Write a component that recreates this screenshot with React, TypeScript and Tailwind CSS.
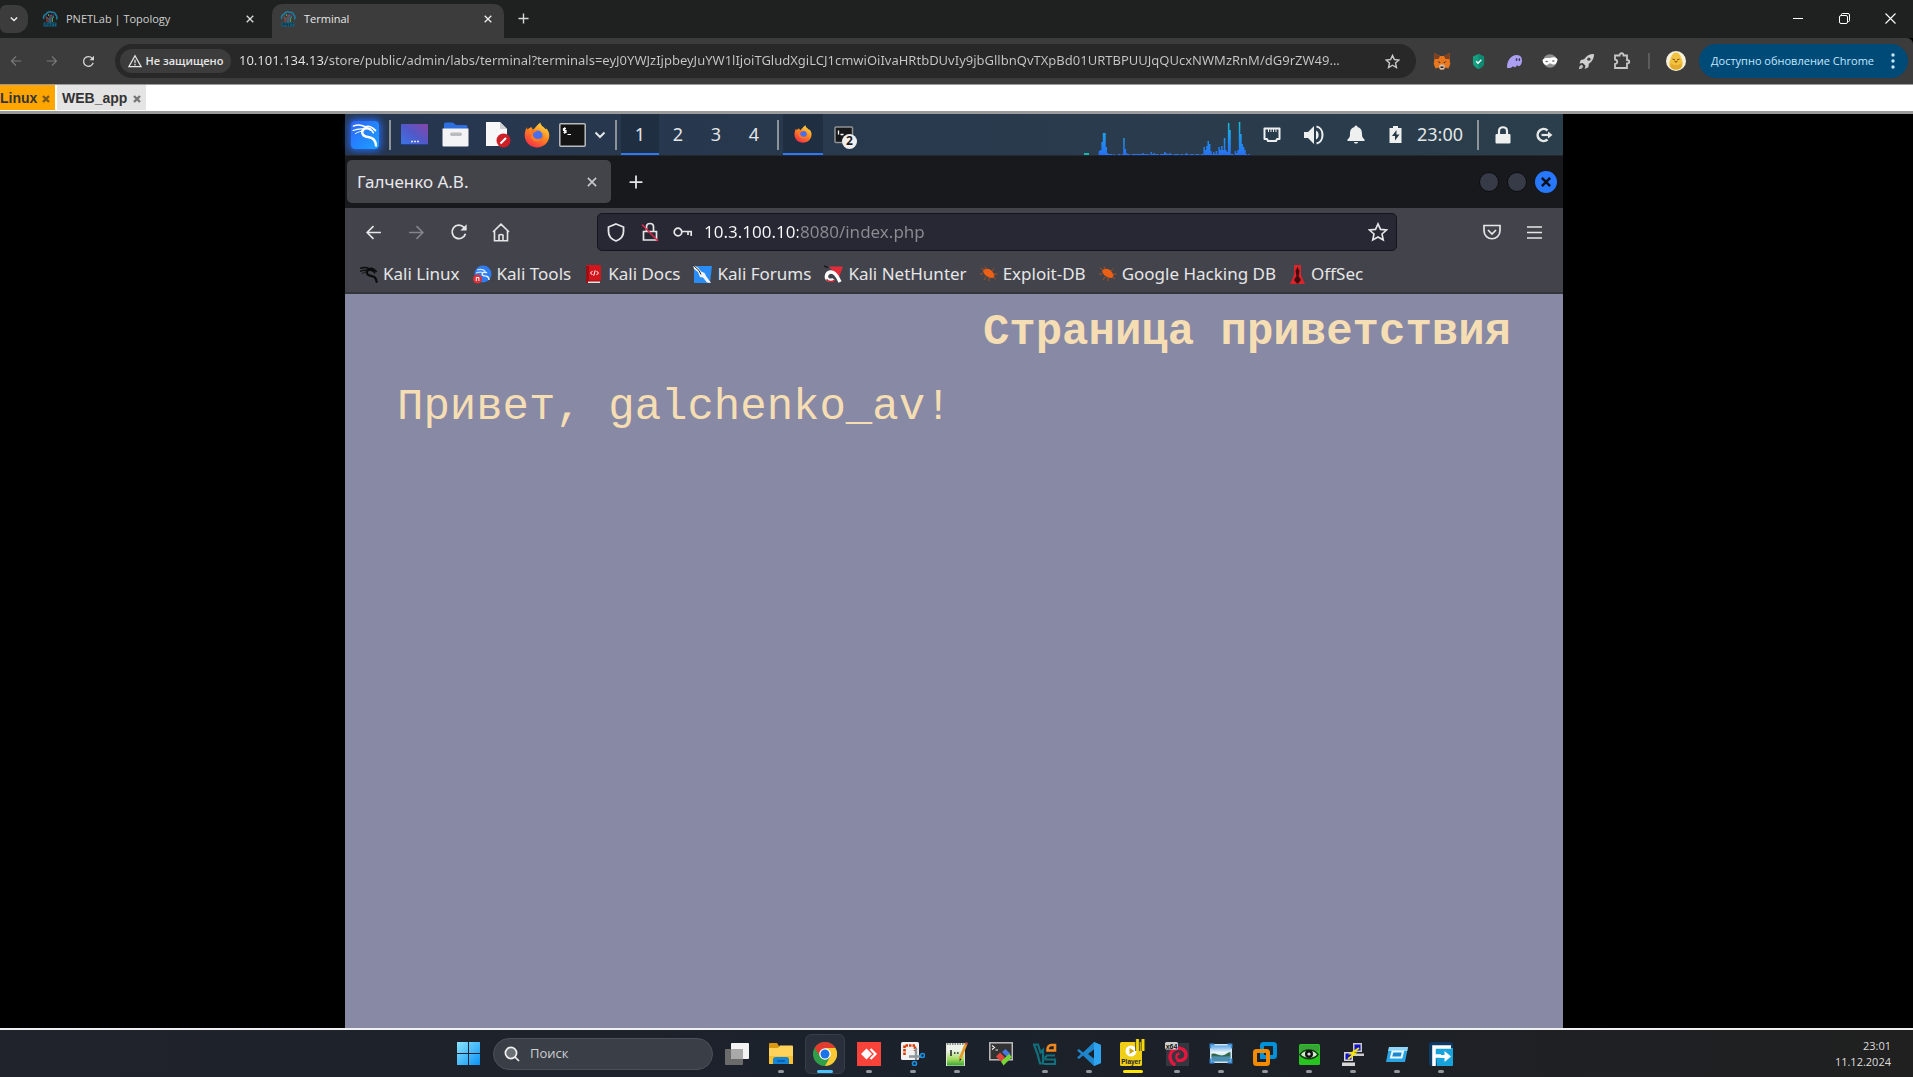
import React from "react";

type IconProps = { className?: string };

/* ---------- browser chrome icons ---------- */

const PnetIcon = ({ className = "size-4" }: IconProps) => (
  <svg viewBox="0 0 16 16" className={className} fill="none" aria-hidden="true">
    <path d="M2 8C.8 6 2 3.6 4 3.4 5 1 8 .3 9.600 1.400 12 .8 14 2.600 14 4.400c1.400 1 1.200 3 .2 4" stroke="#1d7fa3" strokeWidth="1.500" />
    <path d="M7 12V8L4 6M9 12V7l3-2" stroke="#1a6f91" strokeWidth="1.200" />
    <path d="M5 11V7l-1.500-1.500M8 11V4" stroke="#b3473f" strokeWidth="1" />
    <path d="M10.500 11V7L12 6M6.500 5V3" stroke="#4f9a4d" strokeWidth="1" />
    <path d="M9.200 5.500V3.500M11 4.500l1-1" stroke="#8a58b8" strokeWidth="1" />
    <rect x="1.500" y="11.500" width="13" height="4" rx=".5" fill="#13607f" />
    <path d="M3 14.800v-2.500h1.500v1.300H3M6 14.800v-2.500l1.500 2.500v-2.500M10.500 12.400H9.200v2.300h1.300M9.200 13.500h1M11.500 12.400h2M12.500 12.400v2.400" stroke="#0b2836" strokeWidth=".6" />
  </svg>
);

const Stroke = ({
  d,
  className = "size-4",
  w = 1.6,
  box = "0 0 16 16",
}: {
  d: string;
  className?: string;
  w?: number;
  box?: string;
}) => (
  <svg viewBox={box} className={className} fill="none" stroke="currentColor" strokeWidth={w} aria-hidden="true">
    <path d={d} />
  </svg>
);

const CloseX = ({ className = "size-2" }: IconProps) => <Stroke box="0 0 8 8" d="M.7.7l6.600 6.600M7.300.7L.7 7.300" w={1.3} className={className} />;
const Plus = ({ className = "size-3" }: IconProps) => <Stroke box="0 0 12 12" d="M6 .5v11M.5 6h11" w={1.5} className={className} />;
const ArrowLeft = ({ className }: IconProps) => <Stroke d="M15 8H2M8 2L2 8l6 6" w={1.5} className={className} />;
const ArrowRight = ({ className }: IconProps) => <Stroke d="M1 8h13M8 2l6 6-6 6" w={1.5} className={className} />;
const Reload = ({ className }: IconProps) => (
  <svg viewBox="0 0 16 16" className={className} aria-hidden="true">
    <path d="M13.700 9.500A6 6 0 1 1 12.400 3.900L14 5.500" fill="none" stroke="currentColor" strokeWidth="1.600" />
    <path d="M14.800 1v5.600H9.200z" fill="currentColor" />
  </svg>
);
const Star = ({ className, w = 1.5 }: IconProps & { w?: number }) => (
  <Stroke d="M8 1.500l2 4.400 4.800.5-3.600 3.200 1 4.800L8 12l-4.200 2.400 1-4.800L1.200 6.400 6 5.900z" w={w} className={className} />
);

const Fox = () => (
  <svg viewBox="0 0 18 18" className="size-[18px]" aria-hidden="true">
    <path d="M1 1l6 3h4l6-3-.5 6 .8 5-1.800 4.500-3.500-1-1 2H7l-1-2-3.500 1L.7 12l.8-5z" fill="#e8771e" />
    <path d="M1 1l6 3L5.500 7 1.500 7zM17 1l-6 3 1.500 3 4 0z" fill="#7c3f20" />
    <path d="M4.500 9l3 1.300-.8 1zM13.500 9l-3 1.300.8 1z" fill="#263241" />
    <path d="M6 14l1 3.500h4l1-3.500-1.500-1.500h-3z" fill="#d6c0b0" />
    <path d="M7.300 14.500h3.400l-.4 1.500H7.700z" fill="#262626" />
  </svg>
);
const Shield = () => (
  <svg viewBox="0 0 14 18" className="h-[17px] w-[13px]" aria-hidden="true">
    <path d="M7 1l6 2.500v7c0 3-3 5-6 6.500-3-1.500-6-3.500-6-6.500v-7z" fill="#14a182" />
    <path d="M7 1l6 2.500v7c0 3-3 5-6 6.500z" fill="#0d8a72" />
    <path d="M4.500 8.800l2 2 3.500-3.600" fill="none" stroke="#fff" strokeWidth="1.500" />
  </svg>
);
const Ghost = () => (
  <svg viewBox="0 0 18 16" className="h-[15px] w-[17px]" aria-hidden="true">
    <path d="M1 14C1 7 5 1 11.500 1 15.500 1 17 4 17 7c0 4-2 6-3.500 6-1 0-1.300-1-1.500-1.600-.8 1.600-1.600 2.600-3 2.600-1 0-1.300-.7-1.400-1.300C6.500 14 5 15 3.500 15 2 15 1 14.800 1 14z" fill="#ab9ff2" />
    <ellipse cx="11.200" cy="6" rx=".9" ry="1.500" fill="#3c315b" />
    <ellipse cx="14.200" cy="6" rx=".9" ry="1.500" fill="#3c315b" />
  </svg>
);
const Mask = () => (
  <svg viewBox="0 0 16 16" className="size-4" aria-hidden="true">
    <circle cx="8" cy="8" r="6.800" fill="#8f8f8f" />
    <path d="M.5 7C3 4 6 5.500 8 5c2.500-.8 5-1.300 7.500 1C15.500 9.500 13 12 11 11.500c-1.500-.3-2-1.300-3-1.300S6 12.500 4 12 .5 9.500 .5 7z" fill="#fff" />
    <path d="M3.200 8.500c.8-1.100 2.400-1 3.200.1-.8 1-2.400 1-3.200-.1zM9.700 8c.7-1 2.300-1.100 3.200-.3-.7 1.200-2.300 1.400-3.200.3z" fill="#6d6d6d" />
  </svg>
);
const Rocket = () => (
  <svg viewBox="0 0 18 18" className="size-[17px]" aria-hidden="true">
    <path d="M17 1c-5 0-8 2-10.500 5.500L3 7.500 1.500 11 5 10.500 8 13.500 7 17l4-2 .5-3.500C15 9 17 6 17 1z" fill="#d0d0d0" />
    <circle cx="11.500" cy="6.500" r="1.800" fill="#4a4a4a" />
    <path d="M1 17c0-2.500 1-4 3-4.500L5.500 14C5 16 3.500 17 1 17z" fill="#bdbdbd" />
  </svg>
);
const Puzzle = () => (
  <Stroke box="0 0 18 18" w={1.8} className="size-[18px] text-[#c7c7c7]" d="M2 3.500h4.500c0-3 4-3 4 0H14V8c3 0 3 3.500 0 3.500V16H2v-4c3-.5 3-4 0-4.500z" />
);
const Avatar = () => (
  <svg viewBox="0 0 20 20" className="size-5" aria-hidden="true">
    <circle cx="10" cy="10" r="10" fill="#f7f1dc" />
    <path d="M10 1.500c3 0 4.500 3 5.500 6 1.500 3 2 7-.5 9.500-2.500 2-7.500 2-10 0C2.500 14.500 3 11 4.500 8 5.500 4.500 7 1.500 10 1.500z" fill="#f2c341" />
    <path d="M5 12c3 3 7 3 10 0 1 2 .8 4-.5 5.200-2.500 1.800-6.500 1.800-9 0C4.200 16 4 14 5 12z" fill="#e5a92c" />
    <path d="M6.500 8l2.500 1M13.500 8L11 9" stroke="#7b4510" strokeWidth="1" />
    <path d="M8 10h4l-2 2z" fill="#b05b12" />
  </svg>
);

/* ---------- Kali desktop icons ---------- */

const DragonPath = ({ color, w = 2 }: { color: string; w?: number }) => (
  <g fill="none" stroke={color} strokeLinecap="round">
    <path d="M2.500 5c4-1.500 8-1.200 11.500.8" strokeWidth={w * 0.7} />
    <path d="M2 9.500c4-1.700 7.500-2 11-1.500" strokeWidth={w * 0.5} />
    <path d="M4.500 12.500c2.500-1.500 5-2.300 7.500-2.500" strokeWidth={w * 0.4} />
    <path d="M19.500 8.500c-4-2.500-8-1-8.300 2.500-.3 3.500 3.500 4.800 7 5.200 4 .5 6.300 3 6.800 8.300" strokeWidth={w} />
    <path d="M14 5.800c3-1 5.500-.6 7.500 1.200l3 2.500M19 8.500c1.700.6 2.800 1.800 3.300 3.200" strokeWidth={w * 0.7} />
  </g>
);

const KaliLogo = () => (
  <svg viewBox="0 0 28 28" className="size-7 rounded-sm bg-linear-to-br from-[#2f63ff] to-[#1ba1ff] shadow-[0_0_7px_2px_#2667ee]" aria-hidden="true">
    <DragonPath color="#fff" w={2.4} />
  </svg>
);
const DragonMark = () => (
  <svg viewBox="0 2 27 24" className="size-[19px]" aria-hidden="true">
    <DragonPath color="#0c0c0d" w={3.2} />
  </svg>
);
const DesktopIcon = () => (
  <svg viewBox="0 0 27 21" className="h-[21px] w-[27px]" aria-hidden="true">
    <defs>
      <linearGradient id="desk" x1="0" y1="1" x2="1" y2="0">
        <stop offset="0" stopColor="#3b76ea" />
        <stop offset=".5" stopColor="#5158c8" />
        <stop offset="1" stopColor="#8a45a8" />
      </linearGradient>
    </defs>
    <rect width="27" height="21" rx="1" fill="url(#desk)" />
    <path d="M10 17.500h2M13 17.500h2M16 17.500h2" stroke="#d7e3f7" strokeWidth="1.600" />
    <path d="M0 20.500h27" stroke="#27408f" />
  </svg>
);
const FolderIcon = () => (
  <svg viewBox="0 0 27 25" className="h-[25px] w-[27px]" aria-hidden="true">
    <path d="M2 8V2q0-1.500 1.500-1.500H11L14 3h10q1.500 0 1.500 1.500V8z" fill="#2d6fdf" />
    <path d="M.5 6.500H26.500V23.500q0 1-1 1h-24q-1 0-1-1z" fill="#f4f4f6" />
    <rect x="8" y="10.500" width="12" height="3.500" rx="1.700" fill="#b9bcc1" />
  </svg>
);
const DocIcon = () => (
  <svg viewBox="0 0 26 27" className="h-[27px] w-[26px]" aria-hidden="true">
    <path d="M1 1h14l7 7v17H1z" fill="#f7f7f7" />
    <path d="M15 1l7 7h-7z" fill="#cfd1d4" />
    <circle cx="18.500" cy="19.500" r="7" fill="#cf1f26" />
    <path d="M15.500 22.500l5.500-5.500" stroke="#fff" strokeWidth="2.200" />
  </svg>
);
const FirefoxIcon = ({ className }: IconProps) => (
  <svg viewBox="0 0 26 26" className={className} aria-hidden="true">
    <defs>
      <linearGradient id="ff" x1=".8" y1="0" x2=".2" y2="1">
        <stop offset="0" stopColor="#ffe14a" />
        <stop offset=".45" stopColor="#ff8a1f" />
        <stop offset="1" stopColor="#f5264b" />
      </linearGradient>
    </defs>
    <path d="M3 5c0 1.500.3 2 .8 2.600C5 6 6 5.500 7.500 5c.3 1.200.8 2 1.800 2.500C12 5 13 3 16.500.5c0 3 3 4 5 6.500.6.6.8 0 .8-.8C24.500 9 25.500 11.500 25.300 14 25 20.500 19.700 25.500 13 25.500S.700 20.500.7 13.600C.7 10 1.500 7.500 3 5z" fill="url(#ff)" />
    <circle cx="13.500" cy="13.500" r="5" fill="#4a6ef0" />
    <path d="M7.500 7.500c2 .3 4 0 5.500 2-3 .3-3.500 1.500-4.200 2.700C9 15 11 17 14 17c2 0 3.500-.8 5-2.500-1 4-4 5.500-7 5C8 19 5.500 15 7.500 7.500z" fill="#ff7a26" />
  </svg>
);
const TermIcon = () => (
  <svg viewBox="0 0 27 24" className="h-6 w-[27px]" fill="none" aria-hidden="true">
    <rect x=".8" y=".8" width="25.400" height="22.400" rx="1" fill="#141414" stroke="#b9bbbd" strokeWidth="1.500" />
    <path d="M7 5.500H4.500v2H7v2H4.500M5.700 4.300v6.400M8.500 11.500H12" stroke="#fff" strokeWidth="1.200" />
  </svg>
);
const TermCount = () => (
  <span className="relative block h-[18px] w-5">
    <svg viewBox="0 0 20 18" className="h-[18px] w-5" fill="none" aria-hidden="true">
      <rect x="1" y="1" width="17.500" height="15.500" rx="1" fill="#17181a" stroke="#8f9294" strokeWidth="1.500" />
      <path d="M4.500 4.500v4M6.500 8.500h3" stroke="#fff" strokeWidth="1.300" />
    </svg>
    <span className="absolute top-[8px] left-[8px] flex size-[15px] items-center justify-center rounded-full bg-[#efefef] text-[12px] leading-none font-bold text-[#1c1c1c]">2</span>
  </span>
);

const NetIcon = () => (
  <svg viewBox="0 0 18 16" className="h-4 w-[18px]" aria-hidden="true">
    <path d="M1.500 1.500h15v10.500H14L13 14H5l-1-2H1.500z" fill="none" stroke="#eef0f0" strokeWidth="2" strokeLinejoin="round" />
    <path d="M5.500 2v3M8 2v3M10.500 2v3M13 2v3" stroke="#eef0f0" strokeWidth="1" />
  </svg>
);
const VolIcon = () => (
  <svg viewBox="0 0 22 20" className="h-5 w-[22px]" aria-hidden="true">
    <path d="M1 7h4l6-6v18l-6-6H1z" fill="#eef0f0" />
    <path d="M13 5.500c3.500 1 3.500 8 0 9z" fill="#eef0f0" />
    <path d="M13.500 1.500c8 1.500 8 15.500 0 17" fill="none" stroke="#eef0f0" strokeWidth="2" />
  </svg>
);
const BellIcon = () => (
  <svg viewBox="0 0 18 19" className="h-[19px] w-[18px]" fill="#eef0f0" aria-hidden="true">
    <path d="M9 .5c1.200 0 1.400.8 1.500 1.500C14 3 15 5.500 15 9c0 2.500.5 4 2.500 5.500V16H.5v-1.500C2.500 13 3 11.500 3 9c0-3.500 1-6 4.500-7C7.600 1.300 7.800.5 9 .5zM7 17h4c0 2-4 2-4 0z" />
  </svg>
);
const BatteryIcon = () => (
  <svg viewBox="0 0 13 17" className="h-[17px] w-[13px]" aria-hidden="true">
    <path d="M4 0h5v2h3.500v15H.5V2H4z" fill="#eef0f0" />
    <path d="M7.500 4L3 10h3v4.500L10.500 8.500h-3z" fill="#263845" />
  </svg>
);
const LockIcon = () => (
  <svg viewBox="0 0 16 18" className="h-[18px] w-4" aria-hidden="true">
    <path d="M4 8V5c0-5 8-5 8 0v3" fill="none" stroke="#eef0f0" strokeWidth="2.200" />
    <rect x=".5" y="8" width="15" height="9.500" rx="1" fill="#eef0f0" />
  </svg>
);
const LogoutIcon = () => (
  <svg viewBox="0 0 18 16" className="h-4 w-[18px]" aria-hidden="true">
    <path d="M12.500 3.400A6 6 0 1 0 12.500 12.600" fill="none" stroke="#e6e8e8" strokeWidth="2.600" />
    <path d="M6.500 8h8" stroke="#e6e8e8" strokeWidth="2.200" />
    <path d="M13 4.500L17.500 8 13 11.500z" fill="#e6e8e8" />
  </svg>
);

const LOAD = [
  2, 0, 0, 4, 5, 13, 22, 22, 8, 2, 1, 1, 1, 0, 1, 0, 0, 1, 1, 0, 1, 17, 6, 2, 1, 1, 0, 1, 1, 1, 1, 1, 1, 1, 1, 2, 1, 1, 1, 1, 0, 3, 1, 2, 1, 1, 1, 0, 1, 1, 1, 3, 2, 1, 1, 2, 1, 0, 1, 1, 1, 1, 0, 1, 1, 0, 1, 2, 1, 0, 1, 1, 1, 0, 1, 1, 1, 0, 1, 1, 8, 5, 9, 14, 11, 4, 1, 3, 1, 4, 1, 8, 5, 9, 5, 17, 5, 3, 32, 25, 1, 1, 0, 4, 2, 5, 33, 21, 11, 8, 5, 1, 0, 1,
];
const LoadGraph = () => (
  <svg viewBox="0 0 168 38" className="h-[38px] w-[168px]" aria-hidden="true">
    <defs>
      <linearGradient id="load" gradientUnits="userSpaceOnUse" x1="0" y1="38" x2="0" y2="4">
        <stop offset="0" stopColor="#2670f5" />
        <stop offset=".5" stopColor="#1f96ee" />
        <stop offset="1" stopColor="#16c2d4" />
      </linearGradient>
    </defs>
    <rect x="0" y="36" width="5" height="2" fill="#18b8a8" />
    <path
      d={LOAD.slice(1)
        .map((v, i) => (v ? `M${(12 + i * 1.36).toFixed(1)} 38v-${v}h1.500v${v}z` : ""))
        .join("")}
      fill="url(#load)"
    />
  </svg>
);

const TrackShield = () => <Stroke box="0 0 18 19" w={1.8} className="h-[19px] w-[18px]" d="M9 1l7.500 3v4.500C16.500 13 13 16.500 9 18 5 16.500 1.500 13 1.500 8.500V4z" />;
const NoLock = () => (
  <svg viewBox="0 0 18 20" className="h-5 w-[18px]" fill="none" aria-hidden="true">
    <path d="M5.500 9.500V4.500c0-4 7-4 7 0v5M2.500 9.500h13v8.500h-13z" stroke="currentColor" strokeWidth="1.700" />
    <path d="M1 2.500L17 19" stroke="#e2264d" strokeWidth="1.600" />
  </svg>
);
const KeyIcon = () => (
  <svg viewBox="0 0 20 12" className="h-3 w-5" fill="none" stroke="currentColor" strokeWidth="1.700" aria-hidden="true">
    <circle cx="5" cy="6" r="3.800" />
    <path d="M8.800 5.500H19M15 5.500V9M18.200 5.500V10" />
  </svg>
);
const HomeIcon = () => (
  <Stroke box="0 0 18 19" w={1.6} className="h-[19px] w-[18px]" d="M1 9l8-7.800L17 9M2.500 8v9.700h13V8M7 17.500v-5.300q2-1.500 4 0v5.300" />
);
const PocketIcon = () => <Stroke box="0 0 18 16" w={1.7} className="h-4 w-[18px]" d="M1 1.500h16v5c0 11-16 11-16 0zM5 6l4 4 4-4" />;
const BurgerIcon = () => <Stroke box="0 0 15 13" w={1.6} className="h-[13px] w-[15px]" d="M0 1h15M0 6.500h15M0 12h15" />;

const ToolsMark = () => (
  <svg viewBox="0 0 19 19" className="size-[19px]" aria-hidden="true">
    <circle cx="10" cy="9" r="8.500" fill="#2f7cf0" />
    <path d="M4 5c3.500-1 6.500-.5 8.500 1.500M3 8c3-1 5-1 7-.5" fill="none" stroke="#cfe3ff" strokeWidth="1.200" />
    <path d="M14 8c-2-1.500-5-.8-4.800 1.300.3 1.700 2.500 1.700 4.300 2 1.800.4 2.500 1.700 2.500 3.700" fill="none" stroke="#e3efff" strokeWidth="1.400" />
    <circle cx="4.500" cy="14" r="4.500" fill="#dc2f38" />
    <path d="M3.300 16v-3.500h2.600V16" fill="none" stroke="#fff" strokeWidth="1" />
  </svg>
);
const DocsMark = () => (
  <svg viewBox="0 0 19 19" className="size-[19px]" aria-hidden="true">
    <rect x="2" y="0" width="15" height="16" rx="1" fill="#d3161c" />
    <path d="M2 1v17h14v-2.500H5V1z" fill="#9c0f14" />
    <path d="M4 16.500h12v1.500H4z" fill="#e8e2e0" />
    <path d="M8.500 6L6.500 8l2 2M12.500 6l2 2-2 2M11.200 5.300L9.800 10.700" stroke="#fff" strokeWidth="1" fill="none" />
  </svg>
);
const ForumsMark = () => (
  <svg viewBox="0 0 19 19" className="size-[19px]" aria-hidden="true">
    <path d="M1 1h18l-2 17H1z" fill="#2a8df5" />
    <path d="M0 0l5 2.500 3 4 3.500 1.500L13 11l5 7-4-.5-4-5-3-.5L5 7 1 4z" fill="#f4f7fa" />
    <path d="M0 0l6 5.500 2 4" stroke="#222" strokeWidth="1" fill="none" />
  </svg>
);
const HunterMark = () => (
  <svg viewBox="0 0 19 19" className="size-[19px]" aria-hidden="true">
    <path d="M5 1.500h14l-4.500 12z" fill="#e32c3a" />
    <path d="M0 1l4 1.500" stroke="#1a1a1a" strokeWidth="1.500" fill="none" />
    <path d="M16 17C13.500 11 10.500 6.500 6.500 7 2 7.800 1 13 4.500 14.800c2 .9 4 .4 5-.8" fill="none" stroke="#fff" strokeWidth="3.400" />
    <path d="M2.500 14.500c2 2.500 6 2.500 8 .5" fill="none" stroke="#d2202e" strokeWidth="1.600" />
  </svg>
);
const BugMark = () => (
  <svg viewBox="0 0 18 16" className="h-4 w-[18px]" aria-hidden="true">
    <path d="M3 5c2-3 6-3 9 0l2 3c1 2 0 4-2 4-4 0-8-3-9-7z" fill="#ec5f16" />
    <path d="M4 4L1 2M6 3L5 .5M3 8L0 8M6 11l-2 3M9 12l0 3M12 5l2-2.500M14 8l3.500 0M13 11l3 2" stroke="#a9501f" strokeWidth="1" />
  </svg>
);
const OffsecMark = () => (
  <svg viewBox="0 0 17 19" className="h-[19px] w-[17px]" aria-hidden="true">
    <path d="M5 0h7v10l4 9H1l4-9z" fill="#d9242b" />
    <path d="M8.500 2l2 4-1 5 2.500 4-3 3.500H8L5 15l2.500-4-1-5z" fill="#3d0d10" />
  </svg>
);

/* ---------- taskbar icons ---------- */

const T = ({ children }: { children: React.ReactNode }) => (
  <svg viewBox="0 0 24 24" className="size-6" fill="none" aria-hidden="true">
    {children}
  </svg>
);

const TASKS: { name: string; icon: React.ReactNode; mark: "none" | "dot" | "blue" | "yellow" }[] = [
  {
    name: "Представление задач",
    mark: "none",
    icon: (
      <T>
        <rect x="6" y="1" width="18" height="16" rx="1" fill="#f3f3f3" />
        <rect x="0" y="7" width="18" height="16" rx="1" fill="#6b6b6b" />
        <rect x="6" y="7" width="12" height="10" fill="#a9a9a9" />
      </T>
    ),
  },
  {
    name: "Проводник",
    mark: "dot",
    icon: (
      <T>
        <path d="M0 2q0-1 1-1h7l2 3v4H0z" fill="#d99a12" />
        <path d="M0 6h9l2-2.500h12q1 0 1 1V21q0 1-1 1H1q-1 0-1-1z" fill="#ffd25a" />
        <path d="M0 14h24v7q0 1-1 1H1q-1 0-1-1z" fill="#fbc22c" />
        <path d="M4 22v-4.500Q4 15 6.500 15h11Q20 15 20 17.500V22z" fill="#1285d8" />
        <path d="M8 19h8" stroke="#0a5aa6" strokeWidth="1.500" />
      </T>
    ),
  },
  {
    name: "Google Chrome",
    mark: "blue",
    icon: (
      <T>
        <circle cx="12" cy="12" r="12" fill="#2f9e48" />
        <path d="M1.600 6A12 12 0 0 1 22.400 6H12L7 14z" fill="#e33b2e" />
        <path d="M22.400 6A12 12 0 0 1 12 24l5-9-5-9z" fill="#fcc934" />
        <circle cx="12" cy="12" r="5.800" fill="#fff" />
        <circle cx="12" cy="12" r="4.500" fill="#1a73e8" />
      </T>
    ),
  },
  {
    name: "AnyDesk",
    mark: "dot",
    icon: (
      <T>
        <rect width="24" height="24" fill="#f8433a" />
        <path d="M9.500 6.500L15 12l-5.500 5.500L4 12z" fill="#fff" />
        <path d="M13.500 7l5 5-5 5" stroke="#fff" strokeWidth="2.200" />
      </T>
    ),
  },
  {
    name: "Ножницы",
    mark: "dot",
    icon: (
      <T>
        <rect x="0" y="0" width="18" height="18" rx="1.500" fill="#f1f1f1" />
        <path d="M3.500 13V3.500H14V9" stroke="#d83b01" strokeWidth="2.600" strokeDasharray="2.500 1" />
        <path d="M15 6v12M8 14.500h12" stroke="#8c959c" strokeWidth="2.400" />
        <circle cx="21.500" cy="13.500" r="2" stroke="#1492e6" strokeWidth="1.600" />
        <circle cx="13.500" cy="21.500" r="2" stroke="#1492e6" strokeWidth="1.600" />
      </T>
    ),
  },
  {
    name: "Notepad++",
    mark: "dot",
    icon: (
      <T>
        <defs>
          <linearGradient id="npp" x1="0" y1="0" x2="0" y2="1">
            <stop offset=".3" stopColor="#eef4ea" />
            <stop offset=".7" stopColor="#a4db5e" />
            <stop offset="1" stopColor="#2f9f2f" />
          </linearGradient>
        </defs>
        <path d="M1.500 1.500h18V24h-18z" fill="url(#npp)" stroke="#dfe6da" />
        <path d="M2 2h17" stroke="#8a8f90" strokeWidth="2" strokeDasharray="1.500 1" />
        <path d="M6 8v6M9 11h1.500M12 11h1.500" stroke="#222" strokeWidth="1.500" />
        <path d="M21 2l-6 15" stroke="#e69b2d" strokeWidth="2.800" />
        <path d="M20.300 1l2.300 1" stroke="#c44f43" strokeWidth="2" />
        <path d="M14.500 19.500l.3-3 1.600.8z" fill="#222" />
      </T>
    ),
  },
  {
    name: "MobaXterm",
    mark: "none",
    icon: (
      <T>
        <rect x=".8" y=".8" width="22.500" height="17" fill="#333" stroke="#bcbcbc" strokeWidth="1.500" />
        <path d="M3 3.500l2.500 2L3 7.500M6.500 8H9" stroke="#eee" strokeWidth="1.200" />
        <path d="M7 14.500l4-4 5 5-4 4z" fill="#e2453f" />
        <path d="M13 10l3.500-3 5 5-3 3.500z" fill="#4778e0" />
        <path d="M12 19.500l8-7.500 3 3-8.500 8.500z" fill="#79d637" />
      </T>
    ),
  },
  {
    name: "Veeam",
    mark: "dot",
    icon: (
      <T>
        <path d="M1 2.500h4l2.500 8L10 8v13.500H7L4.500 12zM22 13.500h-8l-1.500 1.500v2.500H22V22H11" stroke="#11707c" strokeWidth="2.200" />
        <path d="M14.500 8.500c0-4 1.500-5.500 4-5.500H22v5.500z" stroke="#ee8820" strokeWidth="2.600" />
      </T>
    ),
  },
  {
    name: "Visual Studio Code",
    mark: "dot",
    icon: (
      <T>
        <path d="M17 0l7 3v18l-7 3L6 13.500 2 17 0 15.500 4 12 0 8.500 2 7l4 3.500zM17.500 7L11 12l6.500 5z" fill="#1f86cc" fillRule="evenodd" />
        <path d="M17 0l7 3v18l-7 3z" fill="#2ea4f1" />
      </T>
    ),
  },
  {
    name: "VMware Player",
    mark: "yellow",
    icon: (
      <svg viewBox="0 0 26 28" className="-mt-1 h-7 w-[26px] self-start" aria-hidden="true">
        <rect x="0" y="4" width="22" height="24" rx="1.500" fill="#f2cf17" />
        <circle cx="11" cy="13" r="5.500" fill="#fff" />
        <path d="M9.500 10v6l5-3z" fill="#caa90c" />
        <text x="11" y="25.500" fontSize="6.500" fontWeight="700" textAnchor="middle" fill="#222" fontFamily="Liberation Sans, sans-serif">Player</text>
        <path d="M17.500 1v12M23 1v12" stroke="#3a3a24" strokeWidth="4.500" />
        <path d="M17.500 1v12M23 1v12" stroke="#f5d90c" strokeWidth="2.800" />
      </svg>
    ),
  },
  {
    name: "Debian",
    mark: "dot",
    icon: (
      <T>
        <rect x="1" y="1" width="23" height="23" fill="#343640" />
        <path d="M12 18c4 1.500 9-.5 9-5 0-5-4.500-7.500-9-6.500C6.500 7.500 4 12.500 5.500 17.500c.8 2.600 2.500 4.500 5 5.500" stroke="#e3163f" strokeWidth="3.400" />
        <path d="M12.500 18c-2-2.500-1.500-6 2-6.500" stroke="#e3163f" strokeWidth="2.400" />
        <rect x="0" y="0" width="13" height="7.500" rx="1.500" fill="#cfcfcf" />
        <text x="6.500" y="6.500" fontSize="7" fontWeight="700" textAnchor="middle" fill="#111" fontFamily="Liberation Sans, sans-serif">x64</text>
      </T>
    ),
  },
  {
    name: "Просмотр изображений",
    mark: "dot",
    icon: (
      <T>
        <defs>
          <linearGradient id="sky" x1="0" y1="0" x2="0" y2="1">
            <stop offset="0" stopColor="#5fa9e6" />
            <stop offset=".45" stopColor="#f0f7fb" />
            <stop offset=".65" stopColor="#c9e2ee" />
          </linearGradient>
        </defs>
        <rect x="1" y="2" width="22" height="19" fill="#cfe4f5" />
        <rect x="2.500" y="3.500" width="19" height="16" fill="url(#sky)" />
        <path d="M2.500 12c4-1.500 6 1.500 10 1.500s6-3.500 9-3.500v5h-19z" fill="#35694f" />
        <path d="M2.500 14.500c7-1 13 1 19-.5v5.500h-19z" fill="#4d8fb0" />
        <path d="M1.500 6.500v-4h4M18.500 2.500h4v4M22.500 16.500v4h-4M5.500 20.500h-4v-4" stroke="#3c8fdb" strokeWidth="1.800" />
      </T>
    ),
  },
  {
    name: "VMware Workstation",
    mark: "dot",
    icon: (
      <T>
        <rect x="9" y="2" width="13" height="13" rx="1.500" stroke="#0091da" strokeWidth="4" />
        <rect x="2" y="9" width="13" height="13" rx="1.500" stroke="#f38b00" strokeWidth="4" />
        <path d="M9 11V15h4" stroke="#0091da" strokeWidth="4" />
      </T>
    ),
  },
  {
    name: "Процессы",
    mark: "dot",
    icon: (
      <T>
        <rect x="2" y="2" width="21" height="21" rx="1.500" fill="#28c420" />
        <path d="M3 3h19v6H3z" fill="#38a336" />
        <path d="M3 12.500c4-6 14-6 18 0-4 5.500-14 5.500-18 0z" fill="#cfe8cb" stroke="#123d12" strokeWidth="1.500" />
        <circle cx="12" cy="12" r="4" fill="#111" />
        <circle cx="12" cy="12" r="1.600" fill="#ddd" />
      </T>
    ),
  },
  {
    name: "PuTTY",
    mark: "dot",
    icon: (
      <T>
        <path d="M12 1h9v9h-9zM11 11.500h12V14H11z" fill="#c9c9c9" />
        <rect x="13.500" y="2.500" width="6" height="6" fill="#1010c8" />
        <path d="M3 10h9v9H3zM1 20.500h13V24H1z" fill="#d6d6d6" />
        <rect x="4.500" y="11.500" width="6" height="6" fill="#1010c8" />
        <path d="M18 6l-8 5.500h4L7 17" stroke="#f5e500" strokeWidth="1.800" />
      </T>
    ),
  },
  {
    name: "Подключение",
    mark: "dot",
    icon: (
      <T>
        <path d="M4 5h19l-3 15H1z" fill="#2aa4e4" />
        <path d="M4 5h19l-.8 4H3.200z" fill="#8fd7fa" />
        <path d="M7.500 9.500h10.500l-1.500 6H6z" fill="#1c87cc" stroke="#e9f7ff" strokeWidth="2" />
      </T>
    ),
  },
  {
    name: "WinSCP",
    mark: "dot",
    icon: (
      <T>
        <rect x="0" y="0" width="24" height="24" rx="3" fill="#0d3b66" />
        <path d="M6 6h18v17q0 1-1 1H8z" fill="#18a3dc" />
        <path d="M5 24V5h17M5 14h7" stroke="#fff" strokeWidth="3.600" />
        <path d="M12 14.500h5" stroke="#fff" strokeWidth="3" />
        <path d="M15.500 9l6.500 5.500-6.500 5.500z" fill="#fff" />
      </T>
    ),
  },
];

const MARKS = {
  none: "bg-transparent w-1.5",
  dot: "bg-[#93979c] w-1.5",
  blue: "bg-[#4cc2ff] w-4",
  yellow: "bg-[#ffe600] w-5",
};

/* ---------- sections ---------- */

function TabStrip() {
  return (
    <header className="flex h-[38px] items-center bg-[#1f2120] text-[11px] text-[#d0d0d0]">
      <button aria-label="Поиск вкладок" className="flex h-7 w-7 items-center justify-center rounded-r-xl rounded-l-md bg-[#3c3c3c] text-[#eee]">
        <Stroke box="0 0 10 6" d="M1 1l4 4 4-4" w={1.8} className="h-[6px] w-2" />
      </button>
      <div className="flex h-full w-[244px] items-center pr-[18px] pl-[14px]">
        <PnetIcon />
        <span className="ml-2 flex-1">PNETLab | Topology</span>
        <button aria-label="Закрыть вкладку PNETLab" className="text-[#ddd]">
          <CloseX />
        </button>
      </div>
      <div className="mt-1 flex h-[34px] w-[232px] items-center rounded-t-[10px] bg-[#3c3c3c] pr-3 pb-1 pl-2 text-[#e8e8e8]">
        <PnetIcon />
        <span className="ml-2 flex-1">Terminal</span>
        <button aria-label="Закрыть вкладку Terminal" className="text-[#eee]">
          <CloseX />
        </button>
      </div>
      <button aria-label="Новая вкладка" className="ml-[14px] pb-0.5 text-[#d8d8d8]">
        <Plus className="size-[11px]" />
      </button>
      <div className="ml-auto flex items-center pb-0.5 text-white">
        <button aria-label="Свернуть" className="flex w-[46px] justify-center">
          <Stroke box="0 0 10 10" d="M0 5.500h10" w={1} className="size-[10px]" />
        </button>
        <button aria-label="Восстановить" className="flex w-[46px] justify-center">
          <Stroke box="0 0 11 11" d="M2.500 2V1.500Q2.500.5 3.500.5h5.500q1.500 0 1.500 1.500v5.500q0 1-1 1H9M.5 4q0-1.500 1.500-1.500h5Q8.500 2.500 8.500 4v5q0 1.500-1.500 1.500H2Q.5 10.500.5 9z" w={1} className="size-[11px]" />
        </button>
        <button aria-label="Закрыть" className="flex w-[46px] justify-center">
          <Stroke box="0 0 11 11" d="M.5.5l10 10M10.500.5l-10 10" w={1.1} className="size-[11px]" />
        </button>
      </div>
    </header>
  );
}

const URL_TEXT =
  "10.101.134.13/store/public/admin/labs/terminal?terminals=eyJ0YWJzIjpbeyJuYW1lIjoiTGludXgiLCJ1cmwiOiIvaHRtbDUvIy9jbGllbnQvTXpBd01URTBPUUJqQUcxNWMzRnM/dG9rZW49...";

function AddressBar() {
  return (
    <div className="flex h-[46px] items-center rounded-tr-md bg-[#3c3c3c] pr-[5px] pl-[10px] text-[#c7c7c7]">
      <button aria-label="Назад" className="mr-6 text-[#7b7b7b]">
        <ArrowLeft className="size-3" />
      </button>
      <button aria-label="Вперёд" className="mr-6 text-[#7b7b7b]">
        <ArrowRight className="size-3" />
      </button>
      <button aria-label="Обновить" className="mr-5 text-[#d5d5d5]">
        <Reload className="size-[13px]" />
      </button>
      <div className="flex h-[34px] min-w-0 flex-1 items-center rounded-full bg-[#282828] pr-4 pl-[5px]">
        <button className="flex h-6 w-[111px] shrink-0 items-center justify-center gap-1 rounded-full bg-[#3c3c3c] text-[11px] font-semibold whitespace-nowrap text-[#e8e8e8]">
          <Stroke d="M8 2L15 14.500H1zM8 6.500v4M8 11.500v1.500" w={1.4} className="size-[14px]" />
          Не защищено
        </button>
        <input
          aria-label="Адресная строка"
          defaultValue={URL_TEXT}
          className="ml-2 min-w-0 flex-1 bg-[linear-gradient(to_right,#e8e8e8_87px,#c8c8c8_87px)] bg-clip-text font-['Noto_Sans',sans-serif] text-[13px] text-transparent outline-none"
        />
        <button aria-label="Добавить в закладки" className="ml-3">
          <Star className="size-[15px]" />
        </button>
      </div>
      <div className="flex items-center">
        {[
          ["MetaMask", <Fox />],
          ["Защита", <Shield />],
          ["Phantom", <Ghost />],
          ["Маска", <Mask />],
          ["Ракета", <Rocket />],
          ["Расширения", <Puzzle />],
        ].map(([name, icon], i) => (
          <button key={i} aria-label={name as string} className="flex w-9 justify-center first:ml-[8px]">
            {icon}
          </button>
        ))}
      </div>
      <span className="ml-[8px] h-4 w-0.5 bg-[#5c5c5c]" />
      <button aria-label="Профиль" className="mx-[13px] ml-[16px]">
        <Avatar />
      </button>
      <button className="flex h-[34px] w-[209px] items-center justify-between rounded-full bg-[#004a77] pr-[13px] pl-3 text-[11px] whitespace-nowrap text-[#c2e7ff]">
        Доступно обновление Chrome
        <svg viewBox="0 0 4 16" className="h-4 w-1" fill="currentColor" aria-hidden="true">
          <circle cx="2" cy="2" r="1.700" />
          <circle cx="2" cy="8" r="1.700" />
          <circle cx="2" cy="14" r="1.700" />
        </svg>
      </button>
    </div>
  );
}

function LabTabs() {
  return (
    <nav className="flex h-[30px] gap-0.5 border-t border-b-[3px] border-[#9b9b9b] bg-white font-['Liberation_Sans',Arial,sans-serif] text-[14px] font-bold text-[#333]">
      <div className="flex h-[25px] w-[55px] items-center justify-between bg-[#ffa500] pt-0.5 pr-[5px]">
        <button className="font-bold">Linux</button>
        <button aria-label="Закрыть Linux" className="text-[#7d5a1b]">
          <Stroke box="0 0 8 8" d="M1 1l6 6M7 1L1 7" w={2.4} className="size-2" />
        </button>
      </div>
      <div className="flex h-[25px] w-[89px] items-center justify-between bg-[#e4e4e4] pt-0.5 pr-[5px] pl-[5px]">
        <button className="font-bold">WEB_app</button>
        <button aria-label="Закрыть WEB_app" className="text-[#777]">
          <Stroke box="0 0 8 8" d="M1 1l6 6M7 1L1 7" w={2.4} className="size-2" />
        </button>
      </div>
    </nav>
  );
}

const Rule = ({ className }: IconProps) => <span className={`h-[30px] w-0.5 shrink-0 bg-[#8d9499] ${className ?? ""}`} />;

function KaliPanel() {
  return (
    <div className="flex h-[41px] items-center bg-linear-to-r from-[#26364f] to-[#2b3e4b] text-[18px] text-[#e3e6e8]">
      <button aria-label="Приложения" className="ml-1.5">
        <KaliLogo />
      </button>
      <Rule className="mr-[10px] ml-[10px]" />
      <div className="flex items-center">
        <button aria-label="Рабочий стол"><DesktopIcon /></button>
        <button aria-label="Файлы" className="ml-[14px]"><FolderIcon /></button>
        <button aria-label="Редактор" className="ml-4"><DocIcon /></button>
        <button aria-label="Firefox" className="ml-[13px]"><FirefoxIcon className="size-[26px]" /></button>
        <button aria-label="Терминал" className="ml-[9px]"><TermIcon /></button>
      </div>
      <button aria-label="Ещё" className="ml-2">
        <Stroke box="0 0 12 8" d="M1.500 1.500L6 6l4.500-4.500" w={2} className="h-2 w-3" />
      </button>
      <Rule className="mr-1 ml-[9px]" />
      <div className="flex h-full">
        <button className="w-[38px] border-b-2 border-[#2f78f7] bg-[#1f2e40] pt-0.5">1</button>
        <button className="w-[38px]">2</button>
        <button className="w-[38px]">3</button>
        <button className="w-[38px]">4</button>
      </div>
      <Rule className="mr-1 ml-1" />
      <button aria-label="Окно Firefox" className="flex h-full w-10 items-center justify-center border-b-2 border-[#2f78f7] bg-[#1f2e40]">
        <FirefoxIcon className="size-[18px]" />
      </button>
      <button aria-label="Окна терминала" className="ml-[11px]">
        <TermCount />
      </button>
      <div className="ml-auto flex items-center self-stretch">
        <div className="self-end">
          <LoadGraph />
        </div>
        <div className="flex items-center">
          <button aria-label="Сеть" className="flex w-10 justify-center"><NetIcon /></button>
          <button aria-label="Звук" className="flex w-[45px] justify-center"><VolIcon /></button>
          <button aria-label="Уведомления" className="flex w-[38px] justify-center"><BellIcon /></button>
          <button aria-label="Батарея" className="flex w-[42px] justify-center"><BatteryIcon /></button>
        </div>
        <time>23:00</time>
      </div>
      <Rule className="mr-4 ml-[14px]" />
      <button aria-label="Заблокировать"><LockIcon /></button>
      <button aria-label="Выйти" className="mr-[10px] ml-6"><LogoutIcon /></button>
    </div>
  );
}

const BOOKMARKS: [string, React.ReactNode][] = [
  ["Kali Linux", <DragonMark />],
  ["Kali Tools", <ToolsMark />],
  ["Kali Docs", <DocsMark />],
  ["Kali Forums", <ForumsMark />],
  ["Kali NetHunter", <HunterMark />],
  ["Exploit-DB", <BugMark />],
  ["Google Hacking DB", <BugMark />],
  ["OffSec", <OffsecMark />],
];

function FirefoxWindow() {
  return (
    <>
      <div className="flex h-[53px] items-center border-t border-[#25282d] bg-[#18191d] pb-px pl-0.5 text-[#e8e8ea]">
        <div className="flex h-[43px] w-[264px] items-center rounded-[5px] bg-[#43444a] pr-[14px] pl-[10px] text-[17px]">
          <span className="flex-1">Галченко А.В.</span>
          <button aria-label="Закрыть вкладку" className="text-[#c9c9cc]">
            <CloseX className="size-[10px]" />
          </button>
        </div>
        <button aria-label="Новая вкладка" className="ml-[18px]">
          <Plus className="size-[14px]" />
        </button>
        <div className="mr-[6px] ml-auto flex items-center gap-2">
          <button aria-label="Свернуть" className="size-5 rounded-full border border-[#0c0d0f] bg-[#373b48]" />
          <button aria-label="Развернуть" className="size-5 rounded-full border border-[#0c0d0f] bg-[#373b48]" />
          <button aria-label="Закрыть" className="flex size-[22px] items-center justify-center rounded-full bg-[#2777ff] text-[#0a0f1c]">
            <CloseX className="size-[10px] stroke-2" />
          </button>
        </div>
      </div>
      <div className="bg-[#43444b] text-[#e6e6e8]">
        <div className="flex h-[48px] items-center">
          <button aria-label="Назад" className="ml-5"><ArrowLeft className="size-[17px]" /></button>
          <button aria-label="Вперёд" className="ml-[26px] text-[#84858a]"><ArrowRight className="size-[17px]" /></button>
          <button aria-label="Обновить" className="ml-[25px]"><Reload className="size-[18px]" /></button>
          <button aria-label="Домой" className="ml-6"><HomeIcon /></button>
          <div className="ml-[87px] flex h-[38px] min-w-0 flex-1 items-center rounded-[5px] border border-[#15161b] bg-[#272833] pr-2 pl-[9px]">
            <TrackShield />
            <span className="ml-4 flex"><NoLock /></span>
            <span className="ml-[14px] flex"><KeyIcon /></span>
            <input
              aria-label="Адрес страницы"
              defaultValue="10.3.100.10:8080/index.php"
              className="ml-[11px] min-w-0 flex-1 bg-[linear-gradient(to_right,#fbfbfe_94px,#8b8b92_94px)] bg-clip-text text-[17px] text-transparent outline-none"
            />
            <button aria-label="В закладки"><Star className="size-5" w={1.3} /></button>
          </div>
          <button aria-label="Pocket" className="ml-[86px]"><PocketIcon /></button>
          <button aria-label="Меню" className="mr-[21px] ml-[26px]"><BurgerIcon /></button>
        </div>
        <nav className="flex h-[38px] items-center gap-[13px] border-b-2 border-[#34353b] pl-[14px] text-[17px]">
          {BOOKMARKS.map(([name, icon]) => (
            <a key={name} href="#" className="flex items-center gap-[5px] whitespace-nowrap">
              {icon}
              {name}
            </a>
          ))}
        </nav>
      </div>
      <main className="flex-1 bg-[#8889a5] px-[52px] pt-3 font-['Liberation_Mono',monospace] text-[44px] text-[#f5deb3]">
        <h1 className="text-right leading-[52px] font-bold">Страница приветствия</h1>
        <p className="mt-6 leading-[50px]">Привет, galchenko_av!</p>
      </main>
    </>
  );
}

function Taskbar() {
  return (
    <footer className="grid h-[49px] grid-cols-[1fr_auto_1fr] items-center border-t-2 border-[#f0f0f0] bg-linear-to-r from-[#20232c] via-[#1b212b] to-[#202020] pr-1">
      <span />
      <div className="flex items-center">
        <button aria-label="Пуск" className="flex w-11 justify-center">
          <svg viewBox="0 0 23 23" className="size-[23px]" aria-hidden="true">
            <defs>
              <linearGradient id="win" x1="0" y1="0" x2="1" y2="1">
                <stop offset="0" stopColor="#8be3ff" />
                <stop offset="1" stopColor="#0a93f5" />
              </linearGradient>
            </defs>
            <path d="M0 0h11v11H0zM12 0h11v11H12zM0 12h11v11H0zM12 12h11v11H12z" fill="url(#win)" />
          </svg>
        </button>
        <label className="mr-0.5 ml-[3px] flex h-8 w-[220px] items-center gap-[10px] rounded-full border border-[#4c5059] bg-[#3a3e47] pl-[10px]">
          <svg viewBox="0 0 16 16" className="size-4" fill="#6b6f76" stroke="#f0f0f0" strokeWidth="1.700" aria-hidden="true">
            <circle cx="7" cy="7" r="5.600" />
            <path d="M11 11l4 4" />
          </svg>
          <input aria-label="Поиск" placeholder="Поиск" className="w-40 bg-transparent text-[13px] text-white outline-none placeholder:text-[#cdcfd2]" />
        </label>
        {TASKS.map((t) => (
          <button key={t.name} aria-label={t.name} className="flex h-10 w-11 flex-col items-center pt-2">
            <span className={t.mark === "blue" ? "-mx-2 -mt-2 flex h-10 w-10 justify-center rounded-md border border-[#383d48] bg-[#2a303b] pt-[7px]" : "flex h-7"}>
              {t.icon}
            </span>
            <span className={`h-[3px] shrink-0 rounded-full ${MARKS[t.mark]} ${t.mark === "blue" ? "-mt-[4px]" : ""}`} />
          </button>
        ))}
      </div>
      <div className="pr-[18px] text-right text-[11px] leading-4 text-[#dedede]">
        <div>23:01</div>
        <div>11.12.2024</div>
      </div>
    </footer>
  );
}

export default function App() {
  return (
    <div className="flex h-screen flex-col overflow-hidden bg-black font-['Open_Sans','Noto_Sans',sans-serif]">
      <TabStrip />
      <AddressBar />
      <LabTabs />
      <div className="flex min-h-0 flex-1 justify-center bg-black pr-[5px]">
        <section className="flex w-full max-w-[1218px] flex-col font-['Noto_Sans',sans-serif]">
          <KaliPanel />
          <FirefoxWindow />
        </section>
      </div>
      <Taskbar />
    </div>
  );
}
